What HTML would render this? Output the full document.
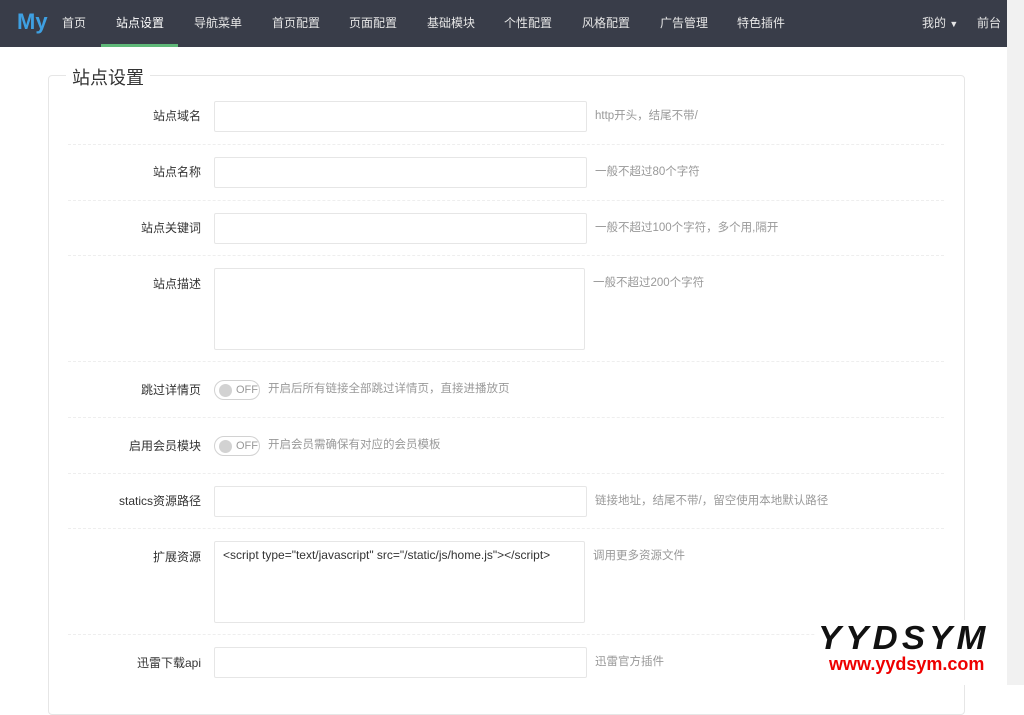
<!DOCTYPE html>
<html><head><meta charset="utf-8"><style>
*{box-sizing:border-box;margin:0;padding:0}
body{width:1024px;height:685px;overflow:hidden;background:#fff;font-family:"Liberation Sans","Noto Sans CJK SC",sans-serif;font-size:12px;color:#333;position:relative}
.nav{position:absolute;left:0;top:0;width:1007px;height:47px;background:#393d49}
.logo{position:absolute;left:17px;top:9px;font-size:22px;font-weight:bold;color:#3ea0e2}
.nav a{position:absolute;top:14px;color:#e6e6e6;font-size:12px;text-decoration:none}
.act{position:absolute;left:101px;top:44px;width:77px;height:3px;background:#5fb878}
.sb{position:absolute;left:1007px;top:0;width:17px;height:685px;background:#f1f1f1}
.th{position:absolute;left:1009px;top:16px;width:13px;height:400px;background:#c1c1c1}
.fs{position:absolute;left:48px;top:75px;width:917px;height:640px;border:1px solid #e6e6e6;border-radius:4px}
.lg{position:absolute;left:66px;top:64px;padding:0 6px;background:#fff;font-size:18px;color:#333}
.lb{position:absolute;right:823px;color:#333}
.in{position:absolute;left:214px;width:373px;height:31px;border:1px solid #e6e6e6;border-radius:2px}
.ta{position:absolute;left:214px;width:371px;height:82px;border:1px solid #e6e6e6;border-radius:2px;padding:6px 8px;font-size:12px}
.tip{position:absolute;color:#999;font-size:11.5px;margin-top:-3px}
.hr{position:absolute;left:68px;width:876px;border-top:1px dashed #eee}
.sw{position:absolute;left:214px;width:46px;height:20px;border:1px solid #d2d2d2;border-radius:20px;color:#999;font-size:11px}
.sw i{position:absolute;left:4px;top:3px;width:13px;height:13px;border-radius:50%;background:#d2d2d2}
.sw span{position:absolute;left:21px;top:3px}
</style></head><body>
<div class="nav">
<div class="logo">My</div>
<a style="left:62px">首页</a><a style="left:116px;color:#fff">站点设置</a><a style="left:194px">导航菜单</a><a style="left:272px">首页配置</a><a style="left:349px">页面配置</a><a style="left:427px">基础模块</a><a style="left:504px">个性配置</a><a style="left:582px">风格配置</a><a style="left:660px">广告管理</a><a style="left:737px">特色插件</a>
<a style="left:922px">我的 <span style="font-size:9px">▼</span></a><a style="left:977px">前台</a>
<div class="act"></div>
</div>
<div class="sb"><div class="th"></div></div>
<div class="fs"></div><div class="lg">站点设置</div>

<div class="lb" style="top:107px">站点域名</div><div class="in" style="top:101px"></div><div class="tip" style="left:595px;top:110px">http开头，结尾不带/</div>
<div class="hr" style="top:144px"></div>
<div class="lb" style="top:163px">站点名称</div><div class="in" style="top:157px"></div><div class="tip" style="left:595px;top:166px">一般不超过80个字符</div>
<div class="hr" style="top:200px"></div>
<div class="lb" style="top:219px">站点关键词</div><div class="in" style="top:213px"></div><div class="tip" style="left:595px;top:222px">一般不超过100个字符，多个用,隔开</div>
<div class="hr" style="top:255px"></div>
<div class="lb" style="top:275px">站点描述</div><div class="ta" style="top:268px"></div><div class="tip" style="left:593px;top:277px">一般不超过200个字符</div>
<div class="hr" style="top:361px"></div>
<div class="lb" style="top:381px">跳过详情页</div><div class="sw" style="top:380px"><i></i><span>OFF</span></div><div class="tip" style="left:268px;top:383px">开启后所有链接全部跳过详情页，直接进播放页</div>
<div class="hr" style="top:417px"></div>
<div class="lb" style="top:437px">启用会员模块</div><div class="sw" style="top:436px"><i></i><span>OFF</span></div><div class="tip" style="left:268px;top:439px">开启会员需确保有对应的会员模板</div>
<div class="hr" style="top:473px"></div>
<div class="lb" style="top:492px">statics资源路径</div><div class="in" style="top:486px"></div><div class="tip" style="left:595px;top:495px">链接地址，结尾不带/，留空使用本地默认路径</div>
<div class="hr" style="top:528px"></div>
<div class="lb" style="top:548px">扩展资源</div><div class="ta" style="top:541px;color:#333">&lt;script type="text/javascript" src="/static/js/home.js"&gt;&lt;/script&gt;</div><div class="tip" style="left:593px;top:550px">调用更多资源文件</div>
<div class="hr" style="top:634px"></div>
<div class="lb" style="top:654px">迅雷下载api</div><div class="in" style="top:647px"></div><div class="tip" style="left:595px;top:656px">迅雷官方插件</div>

<div style="position:absolute;left:816px;top:620px;width:191px;height:65px;background:#fff"></div>
<div style="position:absolute;left:818px;top:619px;font-size:33px;font-weight:bold;font-style:italic;color:#111;letter-spacing:4px;transform:scaleX(1.05);transform-origin:left">YYDSYM</div>
<div style="position:absolute;left:829px;top:654px;font-size:18px;font-weight:bold;color:#e00">www.yydsym.com</div>
</body></html>
